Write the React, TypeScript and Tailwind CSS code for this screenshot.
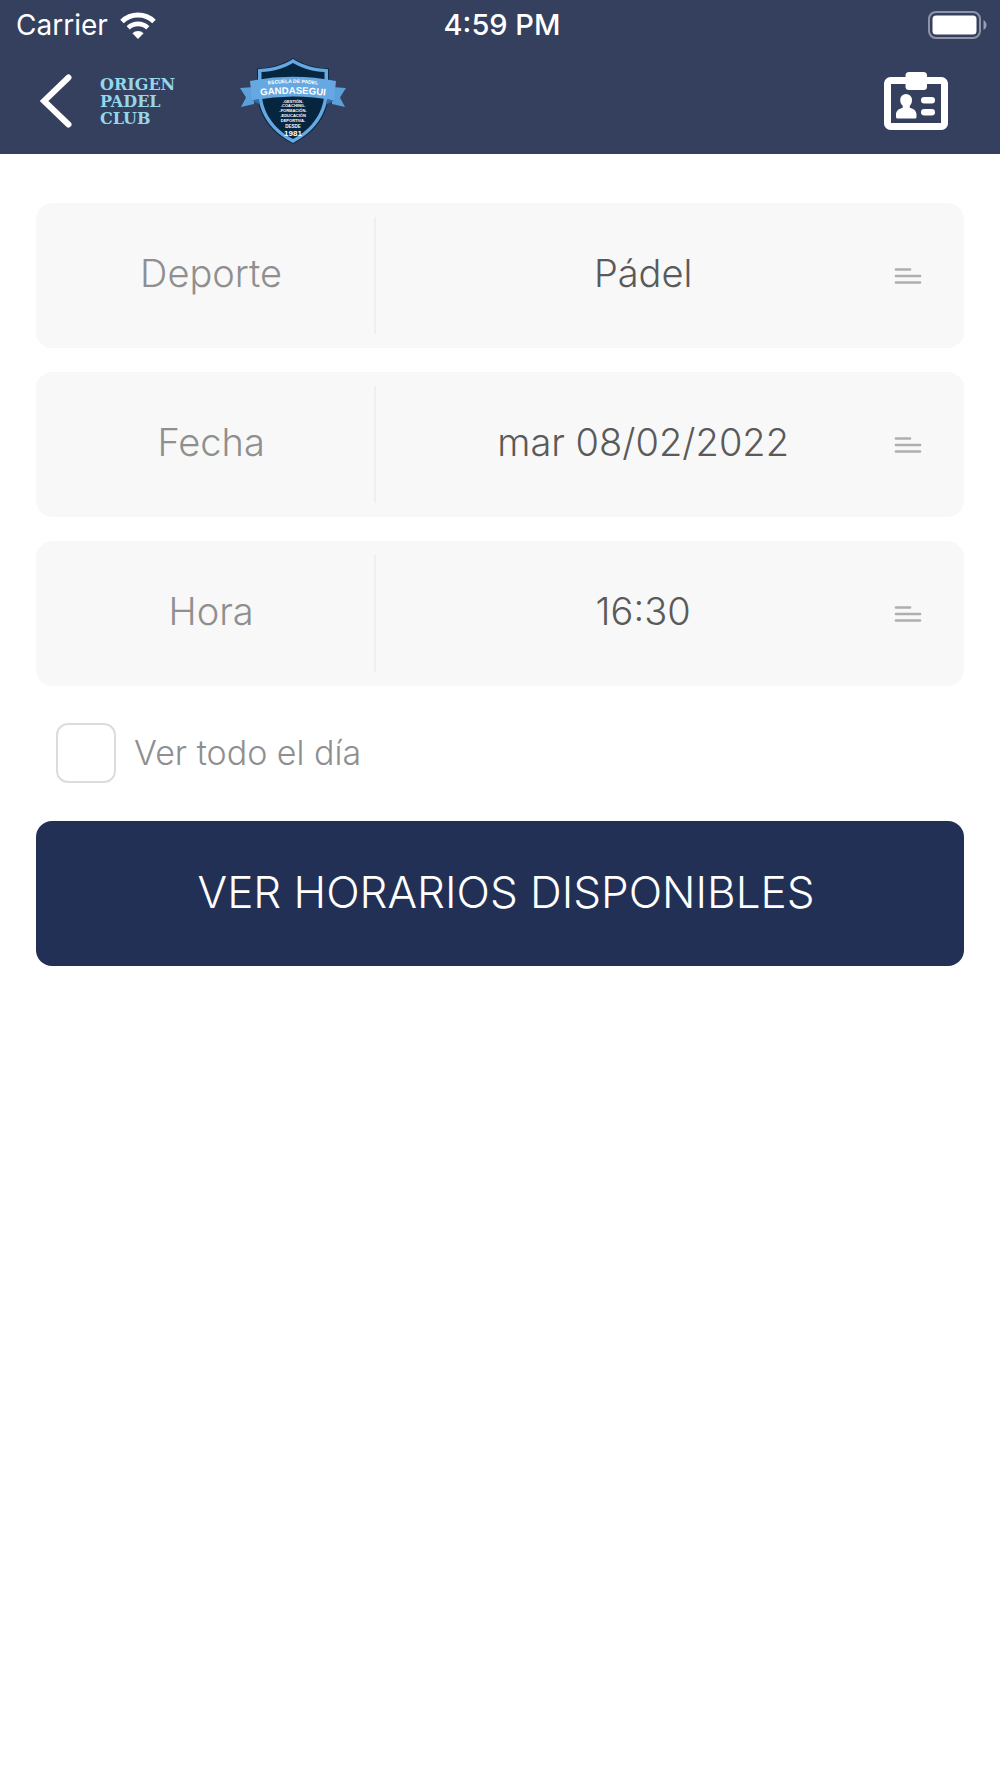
import React, { useState } from 'react';

interface PickerRowProps {
    id: string;
    label: string;
    options: string[];
}

function WifiIcon() {
    return (
        <svg viewBox="0 0 36 27" className="h-[27px] w-9" fill="none" aria-hidden="true">
            <path d="M2 9.5a23 23 0 0 1 32 0" stroke="white" strokeWidth="5" />
            <path d="M8.2 15.8a14.2 14.2 0 0 1 19.6 0" stroke="white" strokeWidth="4.6" />
            <path d="M18 27l-5.6-5.7a8 8 0 0 1 11.2 0z" fill="white" />
        </svg>
    );
}

function BatteryIcon() {
    return (
        <svg viewBox="0 0 60 28" className="h-7 w-[60px]" fill="none" aria-hidden="true">
            <rect x="1" y="1" width="51" height="26" rx="7" stroke="white" strokeOpacity="0.45" strokeWidth="2" />
            <rect x="4.5" y="4.5" width="44" height="19" rx="3.5" fill="white" />
            <path d="M55.5 9c2 1 3 3 3 5s-1 4-3 5z" fill="white" fillOpacity="0.5" />
        </svg>
    );
}

function BadgeIcon() {
    return (
        <svg viewBox="0 0 64 60" className="h-[60px] w-16" fill="none" aria-hidden="true">
            <rect x="3.5" y="9.5" width="57" height="46" rx="3" stroke="white" strokeWidth="7" />
            <rect x="21.5" y="1" width="21.5" height="18" rx="3.5" fill="white" />
            <path
                d="M22 23a6 6 0 0 1 6 6.2c0 2.5-1 4.3-2.2 5.6v2c3.7 1 6.7 3 6.7 6.7V46q0 1.5-1.5 1.5H13.5Q12 47.5 12 46v-2.5c0-3.7 3-5.7 6.7-6.7v-2c-1.3-1.3-2.5-3.1-2.5-5.6A5.9 5.9 0 0 1 22 23z"
                fill="white"
            />
            <rect x="37" y="26" width="14" height="6.5" rx="3.2" fill="white" />
            <rect x="37" y="38" width="14" height="6.5" rx="3.2" fill="white" />
        </svg>
    );
}

function ShieldLogo() {
    const lines = ['-GESTIÓN-', '-COACHING-', '-FORMACIÓN-', '-EDUCACIÓN', 'DEPORTIVA-'];
    return (
        <svg viewBox="0 0 106 87" className="h-[87px] w-[106px]" role="img" aria-label="Escuela de Padel Gandasegui">
            <defs>
                <path id="arc-small" d="M22 27.5Q53 22.5 84 27.5" />
                <path id="arc-name" d="M14 38.5Q53 33 92 38.5" />
            </defs>
            <g fontFamily="Liberation Sans" fontWeight="700" fill="white" textAnchor="middle">
                {/* Ribbon tails */}
                <path d="M0 30l14-1v17l-13 3 5-9.5z" fill="#5b9fdb" />
                <path d="M106 30l-14-1v17l13 3-5-9.5z" fill="#5b9fdb" />
                {/* Shield */}
                <path d="M53 0C42 7 30 10 17 10.5v22C17 57 31 75 53 86c22-11 36-29 36-53.5v-22C76 10 64 7 53 0z" fill="#0b2a45" />
                <path d="M53 1C42 8 31 10.5 18 11.2v21.3C18 56 32 74 53 85c21-11 35-29 35-52.5V11.2C75 10.5 64 8 53 1z" fill="#66a9e2" />
                <path d="M53 5C43 11 33 13.5 21.5 14v18.5C21.5 54 34 71 53 81c19-10 31.5-27 31.5-48.5V14C73 13.5 63 11 53 5z" fill="#06253f" />
                {/* Ribbon */}
                <path d="M10 23Q53 14.5 96 23l-2 19.5Q53 34.500 12 42.5z" fill="#66a9e2" />
                <path d="M12 42.5l7-1.200.8 5.2zM94 42.5l-7-1.200-.8 5.2z" fill="#2f6ea8" />
                <text fontSize="5">
                    <textPath href="#arc-small" startOffset="50%">ESCUELA DE PADEL</textPath>
                </text>
                <text fontSize="9.6">
                    <textPath href="#arc-name" startOffset="50%">GANDASEGUI</textPath>
                </text>
                {lines.map((line, i) => (
                    <text key={line} x="53" y={44.5 + i * 4.8} fontSize="4">{line}</text>
                ))}
                <text x="53" y="70" fontSize="4.5">DESDE</text>
                <text x="53" y="77.5" fontSize="8" fontFamily="Liberation Sans Narrow, Liberation Sans">1981</text>
            </g>
        </svg>
    );
}

function PickerRow({ id, label, options }: PickerRowProps) {
    return (
        <div className="grid grid-cols-[11fr_19fr] items-center rounded-2xl bg-[#f8f8f8] py-3.5">
            <label
                htmlFor={id}
                className="flex h-[117px] items-center justify-center border-r-2 border-[#efefef] pb-1 pl-3 text-[38px] font-light text-[#8f8f8f]"
            >
                {label}
            </label>
            <div className="flex items-center pr-[42px]">
                <select
                    id={id}
                    className="h-[117px] min-w-0 flex-1 appearance-none bg-transparent pb-1 pl-4 text-center text-[38px] font-light text-[#5a5a5a] outline-none [text-align-last:center]"
                >
                    {options.map((option) => (
                        <option key={option}>{option}</option>
                    ))}
                </select>
                <svg viewBox="0 0 28 18" className="h-[18px] w-7 shrink-0" stroke="#aeaeae" strokeWidth="2.7" strokeLinecap="round" aria-hidden="true">
                    <path d="M2 2.5h14M2 9h24M2 15.5h24" />
                </svg>
            </div>
        </div>
    );
}

export default function App() {
    const [allDay, setAllDay] = useState(false);

    return (
        <div className="min-h-screen bg-white font-[Inter,sans-serif]">
            <header className="bg-[#353f5e] text-white">
                {/* Status bar */}
                <div className="grid h-[50px] grid-cols-3 items-center pr-3 pl-4">
                    <div className="flex items-center gap-3 text-[28px]">
                        <span>Carrier</span>
                        <WifiIcon />
                    </div>
                    <span className="text-center text-[29px] font-medium">4:59 PM</span>
                    <div className="flex justify-end">
                        <BatteryIcon />
                    </div>
                </div>

                {/* Navigation */}
                <div className="flex h-[104px] items-center pr-[52px] pb-0.5 pl-10">
                    <button type="button" aria-label="Volver">
                        <svg viewBox="0 0 32 54" className="h-[54px] w-8" fill="none" stroke="white" strokeWidth="6" strokeLinecap="round" aria-hidden="true">
                            <path d="M28.5 3.5L4 27l24.5 23.5" />
                        </svg>
                    </button>
                    <div className="ml-7 w-[112px] font-['DejaVu_Serif',serif] text-[16px] leading-[17px] font-bold text-[#93d7e9]">
                        <p>ORIGEN</p>
                        <p>PADEL</p>
                        <p>CLUB</p>
                    </div>
                    <div className="ml-7">
                        <ShieldLogo />
                    </div>
                    <button type="button" aria-label="Carnet" className="ml-auto">
                        <BadgeIcon />
                    </button>
                </div>
            </header>

            <main className="px-9 pt-[49px]">
                <div className="flex flex-col gap-6">
                    <PickerRow id="deporte" label="Deporte" options={['Pádel']} />
                    <PickerRow id="fecha" label="Fecha" options={['mar 08/02/2022']} />
                    <PickerRow id="hora" label="Hora" options={['16:30']} />
                </div>

                <div className="flex items-center pt-[37px] pb-[38px] pl-5">
                    <input
                        id="todo-el-dia"
                        type="checkbox"
                        checked={allDay}
                        onChange={(e) => setAllDay(e.target.checked)}
                        className="size-[60px] appearance-none rounded-xl border-2 border-[#dcdcdc] bg-white checked:bg-[#233056]"
                    />
                    <label htmlFor="todo-el-dia" className="pl-[18px] text-[34px] leading-[48px] font-light text-[#8f8f8f]">
                        Ver todo el día
                    </label>
                </div>

                <button type="button" className="h-[145px] w-full rounded-2xl bg-[#233056] pb-1 pl-3 text-[44px] font-light text-white">
                    VER HORARIOS DISPONIBLES
                </button>
            </main>
        </div>
    );
}
